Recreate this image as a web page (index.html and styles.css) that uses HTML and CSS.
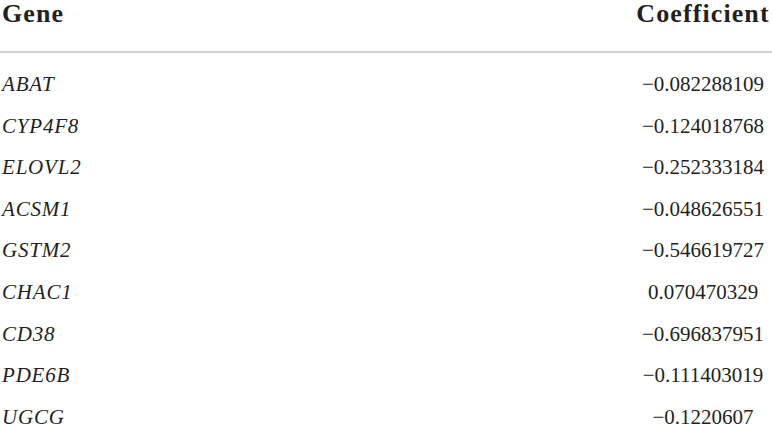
FILE: index.html
```html
<!DOCTYPE html>
<html>
  <head>
    <meta charset="UTF-8">
    <title>Gene Coefficients</title>
    <link rel="stylesheet" href="styles.css">
  </head>
  <body>
    <table class="coef-table">
      <thead>
        <tr>
          <th class="gene-col">Gene</th>
          <th class="coef-col">Coefficient</th>
        </tr>
      </thead>
      <tbody>
        <tr><td class="gene">ABAT</td><td class="value">&minus;0.082288109</td></tr>
        <tr><td class="gene">CYP4F8</td><td class="value">&minus;0.124018768</td></tr>
        <tr><td class="gene">ELOVL2</td><td class="value">&minus;0.252333184</td></tr>
        <tr><td class="gene">ACSM1</td><td class="value">&minus;0.048626551</td></tr>
        <tr><td class="gene">GSTM2</td><td class="value">&minus;0.546619727</td></tr>
        <tr><td class="gene">CHAC1</td><td class="value">0.070470329</td></tr>
        <tr><td class="gene">CD38</td><td class="value">&minus;0.696837951</td></tr>
        <tr><td class="gene">PDE6B</td><td class="value">&minus;0.111403019</td></tr>
        <tr><td class="gene">UGCG</td><td class="value">&minus;0.1220607</td></tr>
      </tbody>
    </table>
  </body>
</html>
```

FILE: styles.css
```css
body {
  margin: 0;
  padding: 0;
  background: #ffffff;
  color: #231f20;
  font-family: "Liberation Serif", "Times New Roman", serif;
}
.coef-table {
  width: 100%;
  border-collapse: collapse;
}
th {
  font-size: 26px;
  font-weight: bold;
  letter-spacing: 1.1px;
  line-height: 28px;
  padding: 0 0 23px 0;
  border-bottom: 2px solid #d2d2d2;
  color: #231f20;
}
.gene-col {
  text-align: left;
  padding-left: 2px;
}
.coef-col {
  width: 138px;
  text-align: center;
}
td {
  font-size: 21px;
  line-height: 41.6px;
  padding: 0;
}
tbody tr:first-child td {
  padding-top: 11px;
}
.gene {
  font-style: italic;
  letter-spacing: 0.8px;
  padding-left: 2px;
}
.value {
  text-align: center;
  white-space: nowrap;
}
```
